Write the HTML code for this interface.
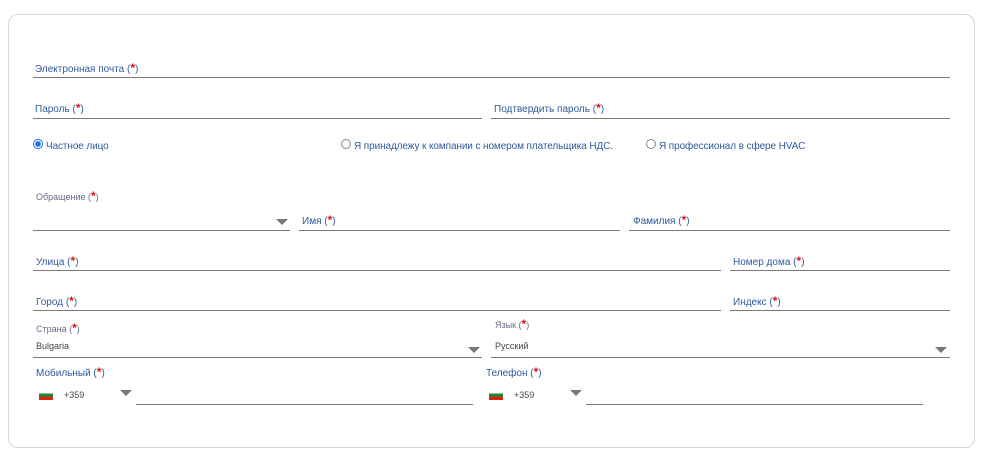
<!DOCTYPE html>
<html><head><meta charset="utf-8"><style>
body{margin:0;width:983px;height:464px;background:#fff;font-family:"Liberation Sans","DejaVu Sans",sans-serif;position:relative;overflow:hidden}
.card{position:absolute;left:8px;top:14px;width:965px;height:432px;border:1px solid #d8d8d8;border-radius:10px}
.l{position:absolute;font-size:10px;color:#2e5a9c;white-space:nowrap}
.s{font-size:9px;color:#6a6a8a}
.l b{font-weight:bold;color:#e01010;font-size:12px;line-height:10px}
.ln{position:absolute;height:1px;background:#7a7a7a}
.ar{position:absolute;width:0;height:0;border-left:6px solid transparent;border-right:6px solid transparent;border-top:6px solid #777}
.v{position:absolute;font-size:9px;color:#444}
.rd{position:absolute;width:8px;height:8px;border:1px solid #888;border-radius:50%;background:#fff}
.flag{position:absolute;width:14px;height:10px;background:linear-gradient(#fff 0 33%,#1a8a3a 33% 66%,#d62612 66%)}
.r{letter-spacing:-0.1px}
</style></head><body>
<div class="card"></div>

<div class="l" style="left:35px;top:63px">Электронная почта (<b>*</b>)</div>
<div class="ln" style="left:33px;top:77px;width:917px"></div>

<div class="l" style="left:35px;top:103px">Пароль (<b>*</b>)</div>
<div class="ln" style="left:33px;top:118px;width:449px"></div>
<div class="l" style="left:494px;top:103px">Подтвердить пароль (<b>*</b>)</div>
<div class="ln" style="left:491px;top:118px;width:459px"></div>

<div class="rd" style="left:33px;top:139px;border-color:#1a73e8;background:radial-gradient(#1a73e8 0 2.5px,#fff 3px)"></div>
<div class="l r" style="left:46px;top:141px">Частное лицо</div>
<div class="rd" style="left:341px;top:139px"></div>
<div class="l r" style="left:354px;top:141px">Я принадлежу к компании с номером плательщика НДС.</div>
<div class="rd" style="left:646px;top:139px"></div>
<div class="l r" style="left:659px;top:141px">Я профессионал в сфере HVAC</div>

<div class="l s" style="left:36px;top:191px">Обращение (<b>*</b>)</div>
<div class="ln" style="left:33px;top:230px;width:257px"></div>
<div class="ar" style="left:276px;top:219px"></div>
<div class="l" style="left:302px;top:215px">Имя (<b>*</b>)</div>
<div class="ln" style="left:299px;top:230px;width:321px"></div>
<div class="l" style="left:633px;top:215px">Фамилия (<b>*</b>)</div>
<div class="ln" style="left:629px;top:230px;width:321px"></div>

<div class="l" style="left:36px;top:256px">Улица (<b>*</b>)</div>
<div class="ln" style="left:33px;top:270px;width:688px"></div>
<div class="l" style="left:733px;top:256px">Номер дома (<b>*</b>)</div>
<div class="ln" style="left:730px;top:270px;width:220px"></div>

<div class="l" style="left:36px;top:296px">Город (<b>*</b>)</div>
<div class="ln" style="left:33px;top:310px;width:688px"></div>
<div class="l" style="left:733px;top:296px">Индекс (<b>*</b>)</div>
<div class="ln" style="left:730px;top:310px;width:220px"></div>

<div class="l s" style="left:36px;top:323px">Страна (<b>*</b>)</div>
<div class="v" style="left:36px;top:341px">Bulgaria</div>
<div class="ln" style="left:33px;top:357px;width:449px"></div>
<div class="ar" style="left:468px;top:347px"></div>
<div class="l s" style="left:495px;top:319px">Язык (<b>*</b>)</div>
<div class="v" style="left:495px;top:341px">Русский</div>
<div class="ln" style="left:491px;top:357px;width:459px"></div>
<div class="ar" style="left:935px;top:347px"></div>

<div class="l" style="left:36px;top:367px">Мобильный (<b>*</b>)</div>
<div class="flag" style="left:39px;top:390px"></div>
<div class="v" style="left:64px;top:390px">+359</div>
<div class="ar" style="left:120px;top:390px"></div>
<div class="ln" style="left:136px;top:404px;width:337px"></div>

<div class="l" style="left:486px;top:367px">Телефон (<b>*</b>)</div>
<div class="flag" style="left:489px;top:390px"></div>
<div class="v" style="left:514px;top:390px">+359</div>
<div class="ar" style="left:570px;top:390px"></div>
<div class="ln" style="left:586px;top:404px;width:337px"></div>
</body></html>
